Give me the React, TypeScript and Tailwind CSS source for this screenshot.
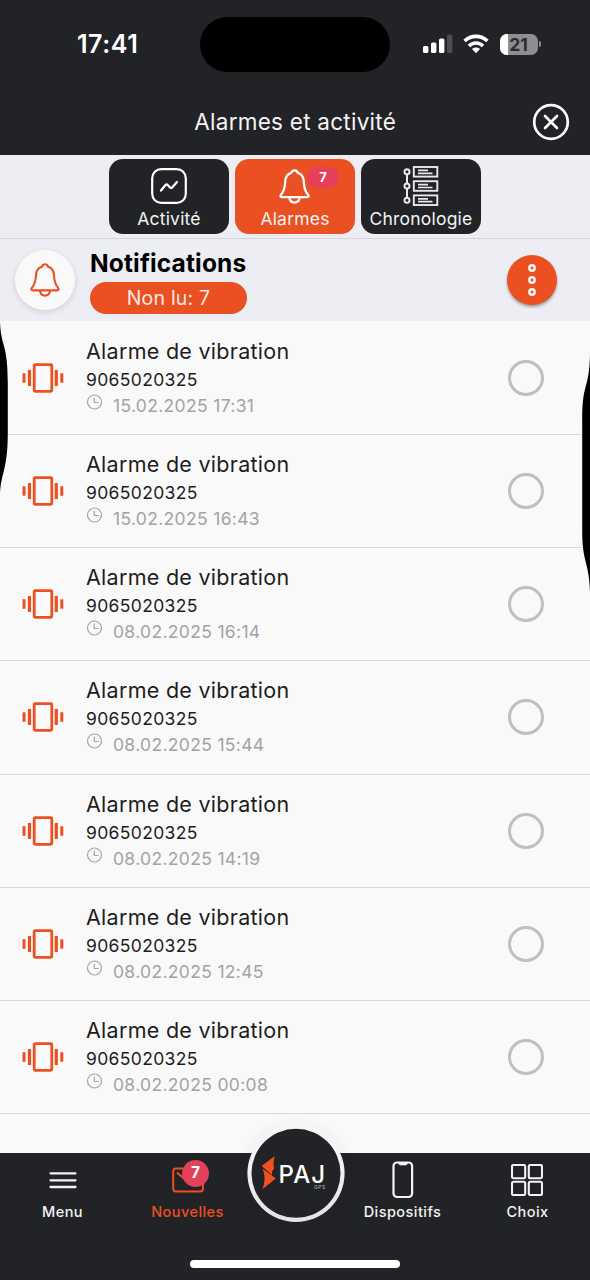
import type { ReactNode } from "react";

const alarms = [
  { date: "15.02.2025 17:31" },
  { date: "15.02.2025 16:43" },
  { date: "08.02.2025 16:14" },
  { date: "08.02.2025 15:44" },
  { date: "08.02.2025 14:19" },
  { date: "08.02.2025 12:45" },
  { date: "08.02.2025 00:08" },
];

const BellIcon = ({ className, strokeWidth }: { className: string; strokeWidth: number }) => (
  <svg viewBox="0 0 30 34" className={className} fill="none" stroke="currentColor" strokeWidth={strokeWidth} strokeLinejoin="round">
    <path d="M15 1.300c-1.900 0-2.700 1.200-3.200 2.500C8 5 6.200 8 6 12c-.2 5.500-.6 9-4.200 13-.9 1.300-.3 2.400 1 2.400h24.400c1.300 0 1.900-1.100 1-2.400C24.600 21 24.200 17.500 24 12c-.2-4-2-7-5.800-8.200C17.700 2.500 16.900 1.300 15 1.300z" />
    <path d="M10 27.600c.3 3.100 2.400 5 5 5s4.700-1.900 5-5" />
  </svg>
);

const VibrationIcon = () => (
  <svg viewBox="0 0 42 30" className="h-[30px] w-[42px]" fill="none" stroke="#eb5022">
    <rect x="12.200" y="1.700" width="17.600" height="26.600" rx="1" strokeWidth="2.800" />
    <path d="M7.500 6.900v16.200M34.300 6.900v16.200" strokeWidth="3.200" />
    <path d="M2 10.200v9.600M39.800 10.200v9.600" strokeWidth="3" />
  </svg>
);

const ClockIcon = () => (
  <svg viewBox="0 0 16 16" className="h-4 w-4" fill="none" stroke="#a5a5a5" strokeWidth="1.200">
    <circle cx="8.500" cy="8" r="7" />
    <path d="M8.300 3.500v5h4.400" />
  </svg>
);

const Tab = ({ label, active, children }: { label: string; active?: boolean; children: ReactNode }) => (
  <div
    className={`relative flex h-[75px] w-[120px] flex-col items-center rounded-[14px] text-white ${
      active ? "bg-[#eb5022]" : "bg-[#222327]"
    }`}
  >
    <div className="flex h-[48px] items-end justify-center pb-[3px]">{children}</div>
    <span className="whitespace-nowrap text-[17.500px] leading-[24px] tracking-[0.2px] text-[#f3f3f3]">{label}</span>
  </div>
);

const NavItem = ({ label, className, children }: { label: string; className: string; children: ReactNode }) => (
  <div className={`flex flex-col items-center ${className}`}>
    <div className="flex h-[49px] items-center pt-[4px]">{children}</div>
    <span className="whitespace-nowrap text-[14.500px] font-medium leading-[20px] tracking-[0.450px]">{label}</span>
  </div>
);

const App = () => {
  return (
    <main className="relative flex h-[1280px] w-[590px] flex-col overflow-hidden bg-[#f9f9f9] font-['Inter',sans-serif]">
      {/* Status bar + title */}
      <header className="h-[155px] shrink-0 bg-[#222327] text-white">
        <div className="flex h-[88px] pt-[17px]">
          <div className="w-[200px] pl-[77px] text-[25px] font-semibold leading-[54px] tracking-[0.550px]">17:41</div>
          <div className="h-[55px] w-[190px] rounded-full bg-black" />
          <div className="flex h-[54px] items-center pl-[33px]">
            <svg viewBox="0 0 30 20" className="h-5 w-[30px]" fill="white">
              <rect x="0" y="12" width="5.400" height="7" rx="1.500" />
              <rect x="8" y="8.500" width="5.400" height="10.500" rx="1.500" />
              <rect x="16" y="4.500" width="5.400" height="14.500" rx="1.500" />
              <rect x="24" y="0.500" width="5.400" height="18.500" rx="1.500" fill="#4c4d50" />
            </svg>
            <svg viewBox="0 0 26 20" className="ml-[10px] h-5 w-[26px]" fill="none" stroke="white" strokeWidth="3.600">
              <path d="M1.600 7C8 .8 18 .8 24.400 7" />
              <path d="M6 12c4-4 10-4 14 0" />
              <path d="M13 19.200l-4-4.200c2.300-2 5.700-2 8 0z" fill="white" stroke="none" />
            </svg>
            <div className="ml-[11px] flex items-center">
              <div className="relative h-[21px] w-[38px] overflow-hidden rounded-[7px] bg-[#8e8e90]">
                <div className="h-full w-2 bg-white" />
                <span className="absolute inset-0 pr-px text-center text-[17.500px] font-bold leading-[21px] text-[#2b2c30]">21</span>
              </div>
              <div className="ml-[1px] h-[6px] w-[2px] rounded-r-full bg-[#8e8e90]" />
            </div>
          </div>
        </div>
        <div className="flex h-[67px] items-center justify-end pr-[20px]">
          <h1 className="mr-[136px] mt-px whitespace-nowrap text-[22.500px] leading-[32px] tracking-[0.250px] text-[#f5f5f5]">Alarmes et activité</h1>
          <svg viewBox="0 0 38 38" className="h-[38px] w-[38px]" fill="none" stroke="white" strokeLinecap="round">
            <circle cx="19" cy="19" r="16.800" strokeWidth="2.700" />
            <path d="M13 13l12 12M25 13L13 25" strokeWidth="2.600" />
          </svg>
        </div>
      </header>

      {/* Tabs */}
      <nav className="flex h-[84px] shrink-0 justify-center gap-[6px] border-b border-[#d5d5d9] bg-[#edeef3] pt-[4px]">
        <Tab label="Activité">
          <svg viewBox="0 0 36 36" className="h-9 w-9" fill="none" stroke="white" strokeLinecap="round" strokeLinejoin="round">
            <rect x="1.200" y="1.200" width="33.600" height="33.600" rx="9" strokeWidth="2.200" />
            <path d="M10 22.500l4.500-5.500c.7-.8 1.500-.8 2.200 0l2.300 2.500c.7.700 1.500.6 2.100-.1L26 14" strokeWidth="2.300" />
          </svg>
        </Tab>
        <Tab label="Alarmes" active>
          <BellIcon className="mr-[2px] h-[35px] w-[31px]" strokeWidth={2.200} />
          <span className="absolute right-[16px] top-[8px] h-[21px] w-[32px] rounded-full bg-[#e5405a] text-center text-[13px] font-bold leading-[21px]">7</span>
        </Tab>
        <Tab label="Chronologie">
          <svg viewBox="0 0 36 40" className="mb-[-2px] h-10 w-9" fill="none" stroke="#e9e9ea">
            <path d="M4 8.500v8.700M4 22.700v8.700" strokeWidth="2" />
            {[0, 1, 2].map((i) => (
              <g key={i} transform={`translate(0 ${i * 14.200})`}>
                <circle cx="4" cy="5.800" r="2.500" strokeWidth="2" />
                <rect x="10.800" y="1" width="23.500" height="9.600" strokeWidth="1.900" />
                <path d="M15 4.400h10M15 7.300h14.500" strokeWidth="1.700" />
              </g>
            ))}
          </svg>
        </Tab>
      </nav>

      {/* Notifications header */}
      <section className="flex h-[82px] shrink-0 bg-[#edeef3] pl-[15px] pr-[33px]">
        <div className="mt-[11px] flex h-[60px] w-[60px] items-center justify-center rounded-full bg-[#f9f9f9] text-[#eb5022] shadow-[0_2px_6px_rgba(0,0,0,0.12)]">
          <BellIcon className="h-[34px] w-[30px]" strokeWidth={2.100} />
        </div>
        <div className="ml-[15px] pt-[9px]">
          <h2 className="whitespace-nowrap text-[24.500px] font-bold leading-[30px] tracking-[0.150px] text-black">Notifications</h2>
          <div className="mt-[4px] h-[32px] w-[157px] rounded-full bg-[#eb5022] text-center text-[19.500px] leading-[32px] tracking-[0.200px] text-[#fbeae4]">
            Non lu: 7
          </div>
        </div>
        <div className="ml-auto mt-[16px] flex h-[50px] w-[50px] items-center justify-center rounded-full bg-[#eb5022] shadow-[0_2px_3px_rgba(0,0,0,0.35)]">
          <svg viewBox="0 0 10 34" className="h-[34px] w-[10px]" fill="none" stroke="#f5f5f5" strokeWidth="2.400">
            <circle cx="5" cy="5" r="2.700" />
            <circle cx="5" cy="17" r="2.700" />
            <circle cx="5" cy="29" r="2.700" />
          </svg>
        </div>
      </section>

      {/* Alarm list */}
      <ul className="shrink-0 pt-px">
        {alarms.map((alarm) => (
          <li key={alarm.date} className="flex h-[113.170px] items-start border-b border-[#dadada] pl-[22px] pr-[46px]">
            <div className="mt-[41px]">
              <VibrationIcon />
            </div>
            <div className="ml-[22px] whitespace-nowrap pt-[15px]">
              <p className="text-[21.500px] leading-[28px] tracking-[0.280px] text-[#1d1d1f]">Alarme de vibration</p>
              <p className="text-[17.500px] leading-[29px] tracking-[0.350px] text-[#1d1d1f]">9065020325</p>
              <div className="flex">
                <ClockIcon />
                <span className="ml-[11px] text-[17.500px] leading-[23px] tracking-[0.330px] text-[#a3a3a3]">{alarm.date}</span>
              </div>
            </div>
            <div className="ml-auto mt-[38px] h-[36px] w-[36px] rounded-full border-[3px] border-[#bfbfbf]" />
          </li>
        ))}
      </ul>

      {/* Bottom navigation */}
      <footer className="relative mt-auto flex h-[127px] shrink-0 bg-[#222327] text-[#f3f3f3]">
        <NavItem label="Menu" className="w-[125px]">
          <svg viewBox="0 0 28 18" className="h-[18px] w-7" stroke="currentColor" strokeWidth="2.300" strokeLinecap="round">
            <path d="M1.500 2.300h25M1.500 9.300h25M1.500 16h25" />
          </svg>
        </NavItem>
        <NavItem label="Nouvelles" className="relative w-[125px] text-[#eb5022]">
          <svg viewBox="0 0 32 26" className="h-[26px] w-8" fill="none" stroke="currentColor" strokeWidth="2" strokeLinecap="round" strokeLinejoin="round">
            <rect x="1.200" y="1.500" width="29.800" height="23" rx="3" />
            <path d="M5.500 6l10.600 9L26.500 6" />
          </svg>
          <span className="absolute left-[57px] top-[7px] h-[27px] w-[27px] rounded-full bg-[#e5405a] text-center text-[15.500px] font-bold leading-[26px] text-white">7</span>
        </NavItem>
        <div className="w-[90px]" />
        <NavItem label="Dispositifs" className="w-[125px]">
          <svg viewBox="0 0 22 38" className="h-[38px] w-[22px]" fill="none" stroke="currentColor" strokeWidth="2.200">
            <rect x="1.500" y="1.500" width="18.600" height="34.500" rx="3.500" />
            <path d="M6.500 1.800c.5 2 1 2.200 2 2.200h5c1 0 1.500-.2 2-2.200z" fill="currentColor" strokeWidth="0.600" />
          </svg>
        </NavItem>
        <NavItem label="Choix" className="w-[125px]">
          <svg viewBox="0 0 32 32" className="mr-px h-8 w-8" fill="none" stroke="currentColor" strokeWidth="2.100">
            <rect x="1" y="1" width="13.200" height="13.200" rx="1.500" />
            <rect x="17.800" y="1" width="13.200" height="13.200" rx="1.500" />
            <rect x="1" y="17.800" width="13.200" height="13.200" rx="1.500" />
            <rect x="17.800" y="17.800" width="13.200" height="13.200" rx="1.500" />
          </svg>
        </NavItem>

        {/* Center logo button */}
        <div className="absolute left-[247px] top-[-28px] h-[97px] w-[98px] rounded-full shadow-[0_0_16px_rgba(0,0,0,0.06)]">
          <svg viewBox="0 0 98 97" className="h-[97px] w-[98px] overflow-visible">
            <defs>
              <linearGradient id="ring" x1="0" y1="0" x2="0" y2="1">
                <stop offset="0.200" stopColor="#f6f6f6" />
                <stop offset="1" stopColor="#e4e4e3" />
              </linearGradient>
            </defs>
            <circle cx="49" cy="48.300" r="48.600" fill="url(#ring)" />
            <circle cx="49" cy="48.300" r="44.500" fill="#222327" />
            <path d="M27.800 31L14.700 41 25 50c-.3-3 .3-5 2.200-6.500-1.200-4-.7-8 .6-12.500z" fill="#f0511f" />
            <path d="M15.500 43.500L28.800 53.500 15.500 64.300c2.500-7 3-13.500 0-20.800z" fill="#f0511f" />
            <text x="31.500 46.300 64.300" y="57.700" fill="white" fontFamily="Inter, sans-serif" fontSize="24" fontWeight="500">PAJ</text>
            <text x="67" y="63.500" fill="#bbbbbd" fontFamily="Inter, sans-serif" fontSize="4.800" textLength="11">GPS</text>
          </svg>
        </div>

        {/* Home indicator */}
        <div className="absolute bottom-[12px] left-[190px] h-[8px] w-[210px] rounded-full bg-white" />
      </footer>

      {/* Volume press bulges on both screen edges */}
      <svg viewBox="0 0 8 172" className="absolute left-0 top-[322px] h-[172px] w-2">
        <path d="M0 0C1 26 7.800 20 7.800 62v48C7.800 148 1 150 0 172z" fill="black" />
      </svg>
      <svg viewBox="0 0 8 236" className="absolute right-0 top-[355px] h-[236px] w-2">
        <path d="M8 0C7 36 .2 26 .2 66v110C.2 208 7 206 8 236z" fill="black" />
      </svg>
    </main>
  );
};

export default App;
